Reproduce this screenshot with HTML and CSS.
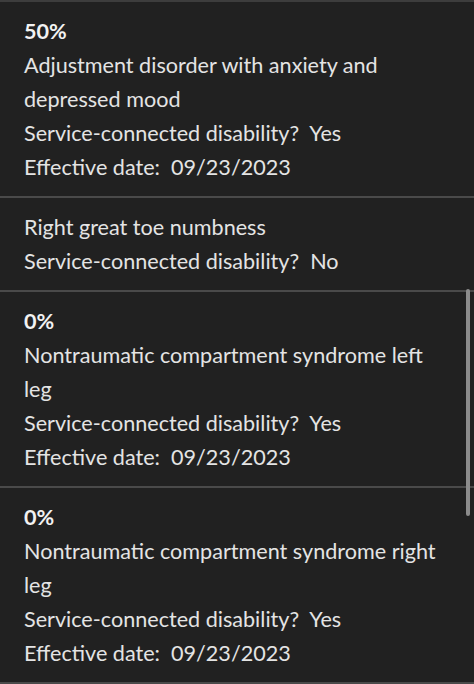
FILE: index.html
```html
<!DOCTYPE html>
<html lang="en">
<head>
<meta charset="utf-8">
<title>Disability ratings</title>
<link rel="stylesheet" href="styles.css">
</head>
<body>
<div class="topbar"></div>
<ul class="list">
  <li class="item">
    <div class="pct">50%</div>
    <div class="line">Adjustment disorder with anxiety and depressed mood</div>
    <div class="line">Service-connected disability?&nbsp; Yes</div>
    <div class="line">Effective date:&nbsp; 09/23/2023</div>
  </li>
  <li class="item">
    <div class="line">Right great toe numbness</div>
    <div class="line">Service-connected disability?&nbsp; No</div>
  </li>
  <li class="item">
    <div class="pct">0%</div>
    <div class="line">Nontraumatic compartment syndrome left leg</div>
    <div class="line">Service-connected disability?&nbsp; Yes</div>
    <div class="line">Effective date:&nbsp; 09/23/2023</div>
  </li>
  <li class="item">
    <div class="pct">0%</div>
    <div class="line">Nontraumatic compartment syndrome right leg</div>
    <div class="line">Service-connected disability?&nbsp; Yes</div>
    <div class="line">Effective date:&nbsp; 09/23/2023</div>
  </li>
</ul>
<div class="scrollbar"></div>
</body>
</html>
```
FILE: styles.css
```css
html, body {
  margin: 0;
  padding: 0;
  background: #212121;
  height: 100%;
  overflow: hidden;
}
body {
  font-family: "Lato", "Open Sans", sans-serif;
  color: #e4e4e4;
  font-size: 21.6px;
  line-height: 34px;
}
.topbar {
  height: 2px;
  background: #3d3d3d;
}
.list {
  list-style: none;
  margin: 0;
  padding: 0;
}
.item {
  padding: 12px 22px 12px 24px;
  border-bottom: 2px solid #4a4a4a;
}
.pct {
  font-weight: 700;
  color: #f2f2f2;
}
.scrollbar {
  position: absolute;
  left: 466px;
  top: 289px;
  width: 4px;
  height: 227px;
  border-radius: 2px;
  background: #8c8c8c;
}
```
